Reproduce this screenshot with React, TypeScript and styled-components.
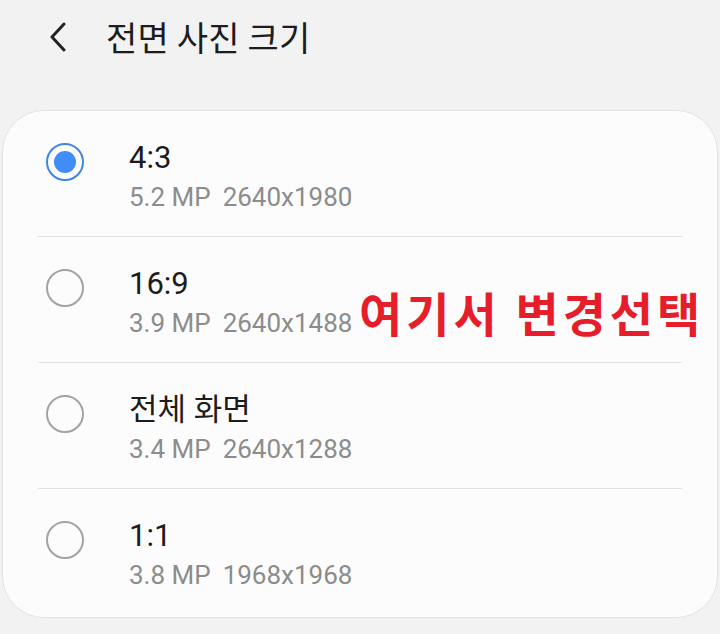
import { useState } from "react";
import styled, { createGlobalStyle } from "styled-components";

const GlobalStyle = createGlobalStyle`
  html, body {
    margin: 0;
    padding: 0;
    background: #f2f2f2;
  }
  body {
    font-family: "Roboto", "Noto Sans CJK KR", sans-serif;
    color: #1e1e1e;
  }
`;

const options = [
  { title: "4:3", mp: "5.2 MP", size: "2640x1980" },
  { title: "16:9", mp: "3.9 MP", size: "2640x1488" },
  { title: "전체 화면", mp: "3.4 MP", size: "2640x1288" },
  { title: "1:1", mp: "3.8 MP", size: "1968x1968" },
];

export default function App() {
  const [selected, setSelected] = useState(0);

  return (
    <>
      <GlobalStyle />
      <Page>
        {/* --- 상단 바 --- */}
        <Header>
          <BackButton aria-label="뒤로">
            <svg width="20" height="30" viewBox="0 0 20 30">
              <path d="M16 2 L4 15 L16 28" fill="none" stroke="#222" strokeWidth="3" strokeLinecap="round" strokeLinejoin="round" />
            </svg>
          </BackButton>
          <Title>전면 사진 크기</Title>
        </Header>

        {/* --- 옵션 목록 --- */}
        <Card>
          {options.map((o, i) => (
            <Row key={o.title} $last={i === options.length - 1} onClick={() => setSelected(i)}>
              <Radio $checked={selected === i} />
              <Texts>
                <OptionTitle>{o.title}</OptionTitle>
                <OptionSub>
                  {o.mp}
                  <Gap />
                  {o.size}
                </OptionSub>
              </Texts>
              {i === 1 && <Annotation>여기서 변경선택</Annotation>}
            </Row>
          ))}
        </Card>
      </Page>
    </>
  );
}

const Page = styled.div`
  width: 720px;
  height: 634px;
  overflow: hidden;
`;

const Header = styled.div`
  display: flex;
  align-items: center;
  height: 74px;
  padding-left: 48px;
`;

const BackButton = styled.div`
  display: flex;
  align-items: center;
  width: 24px;
  height: 30px;
  margin-right: 34px;
`;

const Title = styled.h1`
  margin: 0;
  font-family: "Noto Sans CJK KR", sans-serif;
  font-weight: 400;
  font-size: 34px;
  letter-spacing: 0.2px;
  color: #1c1c1c;
  line-height: 1;
`;

const Card = styled.div`
  margin: 36px 2px 0;
  background: #fcfcfc;
  border: 1px solid #e3e3e3;
  border-radius: 42px;
  padding: 0 35px;
`;

const Row = styled.div<{ $last?: boolean }>`
  position: relative;
  display: flex;
  align-items: flex-start;
  padding: 26px 0 ${(p) => (p.$last ? "26px" : "23px")};
  border-bottom: ${(p) => (p.$last ? "none" : "1.5px solid #e2e2e2")};
  cursor: pointer;
`;

const Radio = styled.span<{ $checked?: boolean }>`
  box-sizing: border-box;
  flex: none;
  width: 38px;
  height: 38px;
  margin: 6px 0 0 8px;
  border-radius: 50%;
  border: 2px solid ${(p) => (p.$checked ? "#3f86e4" : "#a3a3a3")};
  display: flex;
  align-items: center;
  justify-content: center;

  &::after {
    content: "";
    width: 22px;
    height: 22px;
    border-radius: 50%;
    background: #418cf5;
    display: ${(p) => (p.$checked ? "block" : "none")};
  }
`;

const Texts = styled.div`
  display: flex;
  flex-direction: column;
  margin-left: 45px;
`;

const OptionTitle = styled.div`
  font-size: 31px;
  line-height: 42px;
  color: #1c1c1c;
`;

const OptionSub = styled.div`
  margin-top: 2px;
  font-size: 26px;
  line-height: 32px;
  color: #8c8c8c;
`;

const Gap = styled.span`
  display: inline-block;
  width: 12px;
`;

const Annotation = styled.div`
  position: absolute;
  left: 321px;
  top: 51px;
  font-family: "Noto Sans CJK KR", sans-serif;
  font-weight: 700;
  font-size: 47px;
  letter-spacing: 4px;
  line-height: 1;
  color: #e61e2b;
  white-space: nowrap;
`;
